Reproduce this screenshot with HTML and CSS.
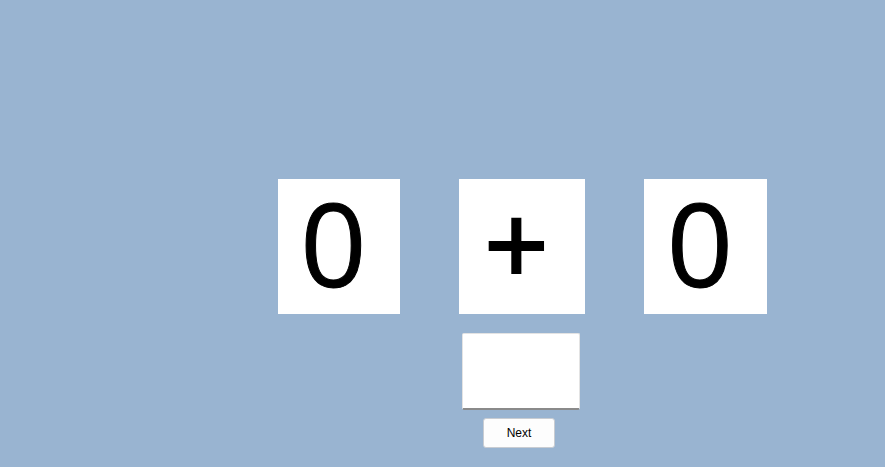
FILE: index.html
```html
<!DOCTYPE html>
<html>
<head>
<meta charset="utf-8">
<link rel="stylesheet" href="styles.css">
</head>
<body>
<main class="quiz">
  <div class="grid">
    <div class="card c1"><span>0</span></div>
    <div class="card c2 op"><span>+</span></div>
    <div class="card c3"><span>0</span></div>
    <div class="answer-cell">
      <input class="answer" type="text" aria-label="Answer">
      <button class="next" type="button">Next</button>
    </div>
  </div>
</main>
</body>
</html>
```
FILE: styles.css
```css
html, body {
  margin: 0;
  height: 100%;
}
body {
  background: #99b4d1;
  overflow: hidden;
}
.quiz {
  padding: 179px 0 0 278px;
}
.grid {
  display: grid;
  grid-template-columns: 122px 126px 123px;
  grid-template-rows: 135px auto;
  column-gap: 59px;
}
.card {
  background: #fff;
  display: flex;
  align-items: center;
  justify-content: center;
  padding-right: 11px;
  box-sizing: border-box;
  font-family: "Open Sans", "DejaVu Sans", sans-serif;
  font-weight: 400;
  font-size: 116px;
  line-height: 1;
  color: #000;
  -webkit-text-stroke: 1px #000;
}
.card.op {
  font-weight: 600;
  -webkit-text-stroke: 0;
}
.card span {
  display: block;
  transform: translateY(-5px);
}
.answer-cell {
  grid-column: 2;
  display: flex;
  flex-direction: column;
  align-items: flex-start;
  padding-top: 19px;
}
.answer {
  width: 118px;
  height: 77px;
  margin: 0 0 0 3px;
  padding: 0;
  box-sizing: border-box;
  border: 1px solid #e3e3e3;
  border-bottom: 2px solid #8a8a8a;
  border-radius: 2px;
  background: #fff;
  outline: none;
}
.next {
  margin: 8px 0 0 24px;
  width: 72px;
  height: 30px;
  box-sizing: border-box;
  border: 1px solid #c8ccd2;
  border-radius: 3px;
  background: #fdfdfd;
  font-family: "Liberation Sans", Arial, sans-serif;
  font-size: 12px;
  color: #000;
  padding: 0;
}
```
